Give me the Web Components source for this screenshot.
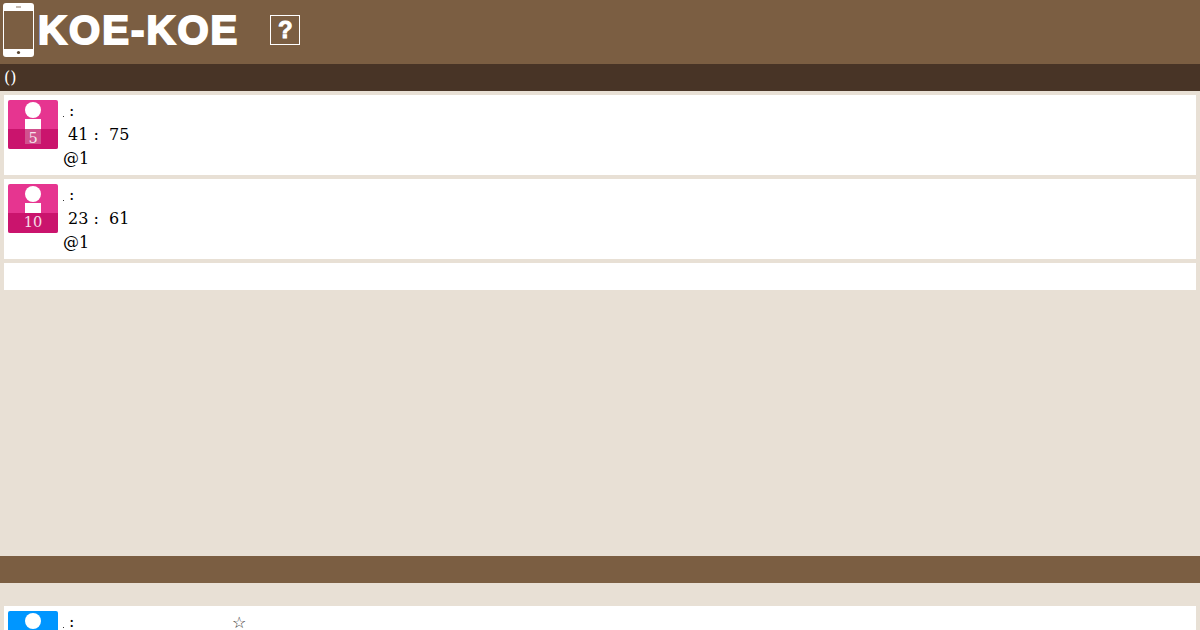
<!DOCTYPE html>
<html>
<head>
<meta charset="utf-8">
<title>KOE-KOE</title>
<style>
  html, body { margin: 0; height: 630px; overflow: hidden; }
  body { background: #e8e0d5; font-family: "DejaVu Serif", serif; font-size: 16px; color: #000; }
  .spacer-main { height: 266px; }
  .spacer-foot { height: 19px; }
</style>
</head>
<body>
<koe-header></koe-header>
<koe-subbar>()</koe-subbar>
<koe-list>
  <koe-card color="pink" rank="5" line="41 :&#160;&#160;75" at="@1"></koe-card>
  <koe-card color="pink" rank="10" short-body line="23 :&#160;&#160;61" at="@1"></koe-card>
  <koe-card></koe-card>
</koe-list>
<div class="spacer-main"></div>
<koe-bar></koe-bar>
<div class="spacer-foot"></div>
<koe-list>
  <koe-card color="blue" star></koe-card>
</koe-list>

<script>
class KoeHeader extends HTMLElement {
  connectedCallback() {
    if (this.shadowRoot) return;
    this.attachShadow({ mode: 'open' }).innerHTML = `
      <style>
        :host { display: flex; align-items: center; height: 64px; background: #7b5e42; color: #fff; padding: 0 0 4px 3px; box-sizing: border-box; }
        svg { display: block; flex: none; margin-top: 0; }
        h1 { margin: 0 0 0 4px; font: 700 40px/1 "Liberation Sans", sans-serif; -webkit-text-stroke: 2px #fff; letter-spacing: 2.1px; }
        .help { margin-left: 31px; width: 30px; height: 30px; box-sizing: border-box; border: 1px solid #fff;
          display: flex; align-items: center; justify-content: center; font: 700 24px/1 "Liberation Sans", sans-serif; -webkit-text-stroke: 0.9px #fff; }
      </style>
      <svg width="31" height="54" viewBox="0 0 31 54" aria-hidden="true">
        <rect width="31" height="54" rx="3" fill="#fff"/>
        <rect x="1" y="8" width="29" height="38" fill="#7b5e42"/>
        <rect x="13" y="3.5" width="5" height="1" fill="#8a7560"/>
        <circle cx="15.5" cy="49.5" r="1.6" fill="#5a4632"/>
      </svg>
      <h1>KOE-KOE</h1>
      <span class="help">?</span>`;
  }
}

class KoeSubbar extends HTMLElement {
  connectedCallback() {
    if (this.shadowRoot) return;
    this.attachShadow({ mode: 'open' }).innerHTML = `
      <style>
        :host { display: block; height: 27px; padding-left: 4px; background: #483426; color: #fff; line-height: 27px; }
      </style>
      <slot></slot>`;
  }
}

class KoeList extends HTMLElement {
  connectedCallback() {
    if (this.shadowRoot) return;
    this.attachShadow({ mode: 'open' }).innerHTML = `
      <style>
        :host { display: flex; flex-direction: column; gap: 4px; padding: 4px 4px 0; }
      </style>
      <slot></slot>`;
  }
}

class KoeCard extends HTMLElement {
  connectedCallback() {
    if (this.shadowRoot) return;
    const color = this.getAttribute('color');
    const root = this.attachShadow({ mode: 'open' });
    if (!color) {
      root.innerHTML = `<style>:host { display: block; height: 27px; background: #fff; }</style>`;
      return;
    }
    const rank = this.getAttribute('rank');
    const line = this.getAttribute('line');
    const at = this.getAttribute('at');
    const tones = color === 'blue' ? ['#0096ff', '#0070cc'] : ['#e63590', '#bd075e'];
    const bodyHeight = this.hasAttribute('short-body') ? 10 : 25;
    root.innerHTML = `
      <style>
        :host { display: block; background: #fff; height: 80px; padding: 5px 4px 0; box-sizing: border-box; }
        .row { display: flex; }
        .avatar { position: relative; flex: none; width: 50px; height: 49px; background: ${tones[0]}; border-radius: 2px; overflow: hidden; }
        .head { position: absolute; left: 17px; top: 2px; width: 16px; height: 16px; border-radius: 50%; background: #fff; }
        .body { position: absolute; left: 17px; top: 19px; width: 16px; height: ${bodyHeight}px; background: #fff; }
        .rank { position: absolute; left: 0; right: 0; bottom: 0; height: 20px; background: ${tones[1]}; opacity: .7; }
        .num { position: absolute; left: 0; right: 0; bottom: 0; height: 20px; line-height: 19px; text-align: center; color: #fff; font-size: 14.5px; opacity: .85; }
        .text { margin-left: 5px; line-height: 24px; white-space: nowrap; position: relative; flex: 1; }
        .name, .line, .at { display: block; height: 24px; }
        .name { margin-top: -1px; }
        .dot { display: inline-block; width: 1px; height: 1px; background: #333; vertical-align: -1px; }
        .star { position: absolute; left: 169px; top: 0; color: #333; }
        .line { padding-left: 5px; }
      </style>
      <div class="row">
        <div class="avatar">
          <div class="head"></div><div class="body"></div><div class="rank"></div>
          ${rank ? `<div class="num">${rank}</div>` : ''}
        </div>
        <div class="text">
          <span class="name"><span class="dot"></span> :</span>
          ${this.hasAttribute('star') ? '<span class="star">☆</span>' : ''}
          ${line ? `<span class="line">${line}</span>` : ''}
          ${at ? `<span class="at">${at}</span>` : ''}
        </div>
      </div>`;
  }
}

class KoeBar extends HTMLElement {
  connectedCallback() {
    if (this.shadowRoot) return;
    this.attachShadow({ mode: 'open' }).innerHTML = `
      <style>
        :host { display: block; height: 27px; background: #7b5e42; }
      </style>`;
  }
}

customElements.define('koe-header', KoeHeader);
customElements.define('koe-subbar', KoeSubbar);
customElements.define('koe-list', KoeList);
customElements.define('koe-card', KoeCard);
customElements.define('koe-bar', KoeBar);
</script>
</body>
</html>
